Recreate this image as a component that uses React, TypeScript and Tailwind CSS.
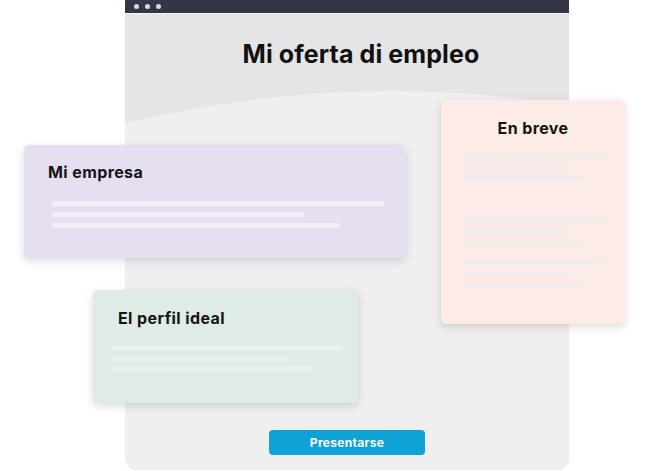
import React from "react";

const font = { fontFamily: "Inter, 'Noto Sans', sans-serif" };

function Lines({ items, color }: { items: { w: number; mt: number }[]; color: string }) {
  return (
    <div className="flex flex-col">
      {items.map((l, i) => (
        <div
          key={i}
          className={`h-[5px] blur-[0.6px] ${color}`}
          style={{ width: l.w, marginTop: l.mt }}
        />
      ))}
    </div>
  );
}

export default function App() {
  return (
    <div className="relative w-[650px] h-[471px] bg-white overflow-hidden" style={font}>
      {/* Browser window */}
      <div className="absolute left-[125px] top-0 w-[444px] h-[470px] flex flex-col rounded-b-[12px] overflow-hidden bg-[#efeff0]">
        <div className="h-[13px] bg-[#343646] flex items-center gap-[6px] pl-[9px] shrink-0">
          <span className="w-[5px] h-[5px] rounded-full bg-[#d9d9de]" />
          <span className="w-[5px] h-[5px] rounded-full bg-[#d9d9de]" />
          <span className="w-[5px] h-[5px] rounded-full bg-[#d9d9de]" />
        </div>
        <div className="h-px bg-[#f4f4f5] shrink-0" />
        <div className="relative flex-1 flex flex-col items-center">
          <svg className="absolute inset-0" width="444" height="456" viewBox="0 0 444 456">
            <rect width="444" height="456" fill="#e5e5e7" />
            <path d="M0 109 Q 230 55 444 92 L444 456 L0 456 Z" fill="#efeff0" />
          </svg>
          <h1 className="relative mt-[25px] pl-[28px] text-[25px] leading-[30px] font-bold text-[#111] tracking-[0.1px]">
            Mi oferta di empleo
          </h1>
          <div className="flex-1" />
          <button className="relative mb-[15px] w-[156px] h-[25px] rounded-[4px] bg-[#0fa3d5] text-white text-[12px] font-bold tracking-[0.3px] flex items-center justify-center">
            Presentarse
          </button>
        </div>
      </div>

      {/* Mi empresa card */}
      <div className="absolute left-[24px] top-[145px] w-[381px] h-[113px] rounded-[5px] bg-[#e6dff2] shadow-[0_3px_10px_rgba(0,0,0,0.14)] pl-[24px] pr-[20px] pt-[16px]">
        <div className="text-[16px] leading-[22px] font-bold text-[#151515] tracking-[0.4px]">Mi empresa</div>
        <div className="pl-[4px] mt-[18px]">
          <Lines
            color="bg-[#f3eff6]"
            items={[
              { w: 332, mt: 0 },
              { w: 252, mt: 6 },
              { w: 288, mt: 6 },
            ]}
          />
        </div>
      </div>

      {/* En breve card */}
      <div className="absolute left-[441px] top-[100px] w-[184px] h-[224px] rounded-[5px] bg-[#fdebe8] shadow-[0_3px_10px_rgba(0,0,0,0.14)] pt-[17px] pl-[22px]">
        <div className="pr-[22px] text-center text-[16px] leading-[22px] font-bold text-[#151515] tracking-[0.4px]">En breve</div>
        <div className="mt-[15px]">
          <Lines color="bg-[#f2ecec]" items={[{ w: 141, mt: 0 }, { w: 107, mt: 6 }, { w: 123, mt: 5 }]} />
        </div>
        <div className="mt-[37px]">
          <Lines color="bg-[#f2ecec]" items={[{ w: 141, mt: 0 }, { w: 107, mt: 8 }, { w: 123, mt: 6 }]} />
        </div>
        <div className="mt-[14px]">
          <Lines color="bg-[#f2ecec]" items={[{ w: 141, mt: 0 }, { w: 107, mt: 7 }, { w: 123, mt: 6 }]} />
        </div>
      </div>

      {/* El perfil ideal card */}
      <div className="absolute left-[93px] top-[290px] w-[265px] h-[113px] rounded-[5px] bg-[#e0ebe6] shadow-[0_3px_10px_rgba(0,0,0,0.14)] pl-[25px] pt-[17px]">
        <div className="text-[16px] leading-[22px] font-bold text-[#151515] tracking-[0.4px]">El perfil ideal</div>
        <div className="-ml-[6px] mt-[16px]">
          <Lines
            color="bg-[#eaf0ed]"
            items={[
              { w: 231, mt: 0 },
              { w: 176, mt: 6 },
              { w: 201, mt: 5 },
            ]}
          />
        </div>
      </div>
    </div>
  );
}
